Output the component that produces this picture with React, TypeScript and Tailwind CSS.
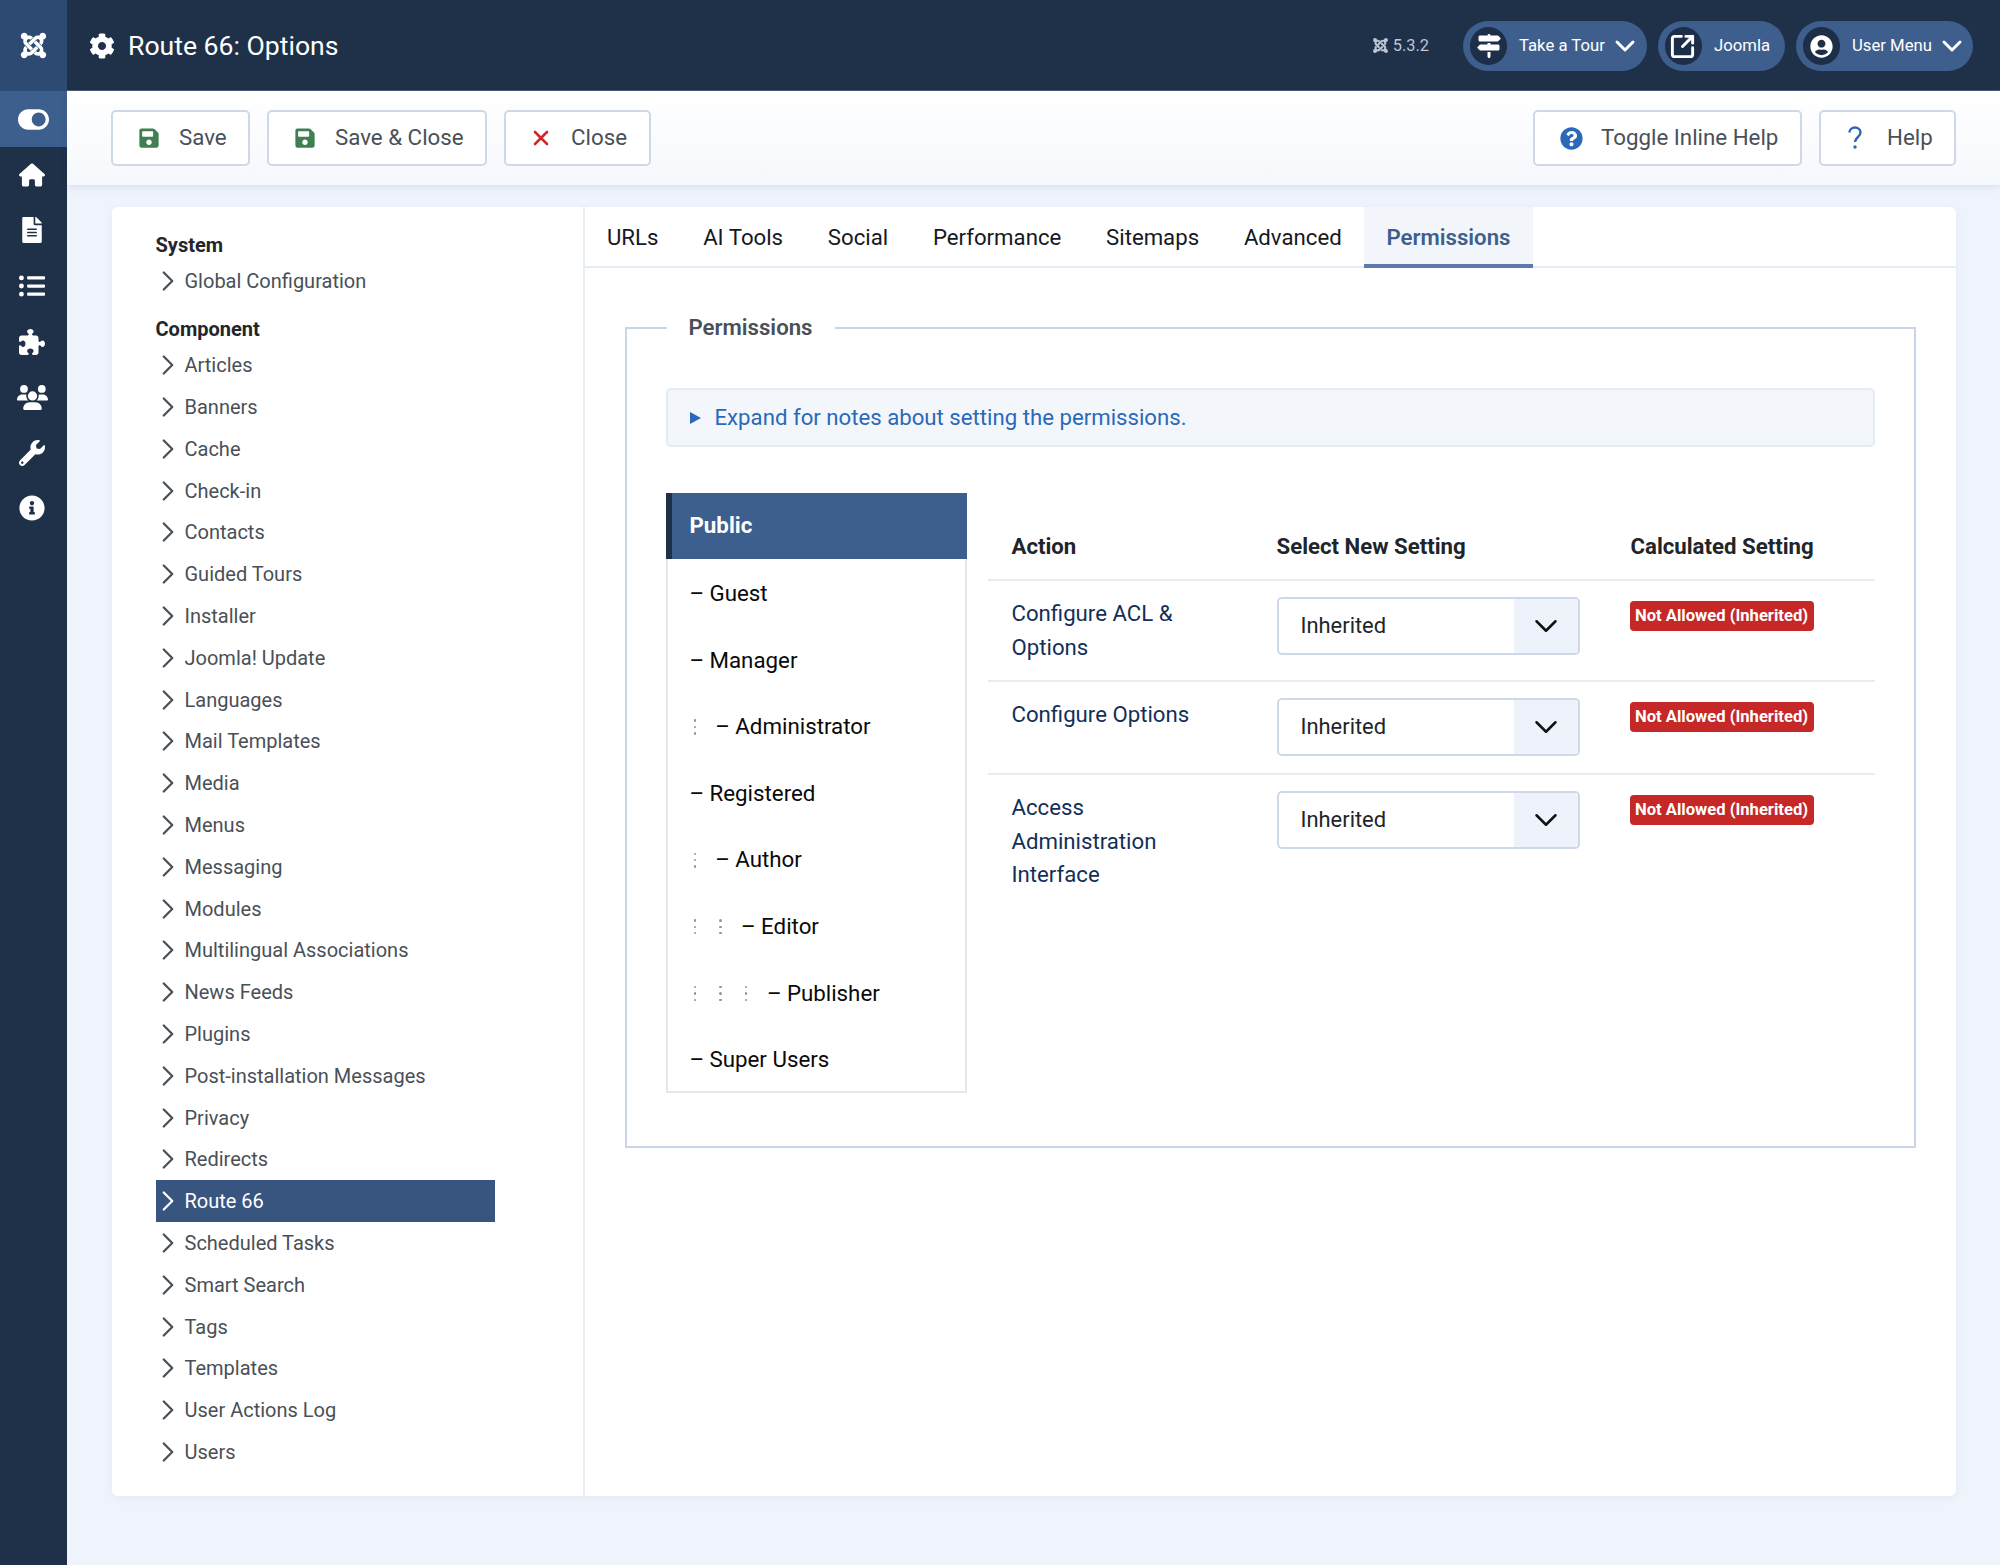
import { ChevronDown, ChevronRight, SquareArrowOutUpRight, X } from "lucide-react";
import {
  FaCog,
  FaFileAlt,
  FaInfoCircle,
  FaJoomla,
  FaListUl,
  FaQuestionCircle,
  FaSave,
  FaToggleOn,
  FaUserCircle,
  FaWrench,
} from "react-icons/fa";
import { FaHouse, FaPuzzlePiece, FaSignsPost, FaUsers } from "react-icons/fa6";

const components = [
  "Articles", "Banners", "Cache", "Check-in", "Contacts", "Guided Tours", "Installer",
  "Joomla! Update", "Languages", "Mail Templates", "Media", "Menus", "Messaging", "Modules",
  "Multilingual Associations", "News Feeds", "Plugins", "Post-installation Messages", "Privacy",
  "Redirects", "Route 66", "Scheduled Tasks", "Smart Search", "Tags", "Templates",
  "User Actions Log", "Users",
];

const tabs = ["URLs", "AI Tools", "Social", "Performance", "Sitemaps", "Advanced", "Permissions"];

const groups = [
  { name: "Guest", level: 0 },
  { name: "Manager", level: 0 },
  { name: "Administrator", level: 1 },
  { name: "Registered", level: 0 },
  { name: "Author", level: 1 },
  { name: "Editor", level: 2 },
  { name: "Publisher", level: 3 },
  { name: "Super Users", level: 0 },
];

const rules = [
  { action: ["Configure ACL &", "Options"], className: "h-[101px]" },
  { action: ["Configure Options"], className: "h-[93px]" },
  { action: ["Access", "Administration", "Interface"], className: "" },
];

const railIcons = [FaHouse, FaFileAlt, FaListUl, FaPuzzlePiece, FaUsers, FaWrench, FaInfoCircle];

function Rail() {
  return (
    <aside className="w-[67px] shrink-0 bg-[#1f3049] text-white flex flex-col items-center">
      <div className="h-[91px] w-full bg-[#2d4a72] grid place-items-center">
        <FaJoomla size={29} />
      </div>
      <div className="h-[56px] w-full bg-[#3d5f8e] grid place-items-center">
        <FaToggleOn size={31} />
      </div>
      {railIcons.map((Icon, i) => (
        <div key={i} className="h-[55.6px] w-full grid place-items-center pr-[3px]">
          <Icon size={i === 4 ? 31 : 26} />
        </div>
      ))}
    </aside>
  );
}

function Pill({ icon, label, chevron, className }: { icon: React.ReactNode; label: string; chevron?: boolean; className: string }) {
  return (
    <div className={`h-[50px] rounded-full bg-[#3e5f8d] flex items-center pl-[7px] text-white ${className}`}>
      <span className="w-[37px] h-[38px] rounded-full bg-[#1d2e48] grid place-items-center">{icon}</span>
      <span className="ml-[12px] text-[16.7px]">{label}</span>
      {chevron && <ChevronDown size={32} strokeWidth={2.2} className="ml-[4px]" />}
    </div>
  );
}

function TopBar() {
  return (
    <header className="h-[91px] pt-[2px] bg-[#1f3049] border-b border-[#4a5d78] flex items-center text-white">
      <FaCog size={26} className="ml-[22px]" />
      <h1 className="ml-[13px] text-[26.6px] leading-none">Route 66: Options</h1>
      <div className="ml-auto mr-[34px] flex items-center gap-[4px] text-[16.4px] text-[#bcc5d2]">
        <FaJoomla size={17} />
        <span>5.3.2</span>
      </div>
      <div className="flex items-center gap-[11px] mr-[27px]">
        <Pill icon={<FaSignsPost size={24} />} label="Take a Tour" chevron className="w-[184px]" />
        <Pill icon={<SquareArrowOutUpRight size={27} strokeWidth={2.6} className="-ml-[2px]" />} label="Joomla" className="w-[127px] pr-[2px]" />
        <Pill icon={<FaUserCircle size={23} />} label="User Menu" chevron className="w-[177px]" />
      </div>
    </header>
  );
}

function ToolButton({ icon, label, className }: { icon: React.ReactNode; label: string; className: string }) {
  return (
    <button className={`h-[56px] rounded-[5px] border-2 border-[#cdd8e8] bg-white flex items-center text-[22.3px] text-[#495057] ${className}`}>
      {icon}
      {label}
    </button>
  );
}

function Toolbar() {
  const save = <FaSave size={22} className="text-[#3f7f52] mr-[19px]" />;
  return (
    <div className="h-[94px] bg-gradient-to-b from-white to-[#f5f8fc] shadow-[0_2px_8px_rgba(30,50,90,0.1)] flex items-center px-[44px] gap-[17px]">
      <ToolButton icon={save} label="Save" className="w-[139px] pl-[25px]" />
      <ToolButton icon={save} label="Save & Close" className="w-[220px] pl-[25px]" />
      <ToolButton icon={<X size={24} strokeWidth={2.6} className="text-[#d3262b] mr-[18px]" />} label="Close" className="w-[147px] pl-[23px]" />
      <ToolButton
        icon={<FaQuestionCircle size={23} className="text-[#2a69b8] mr-[18px]" />}
        label="Toggle Inline Help"
        className="w-[269px] pl-[25px] ml-auto"
      />
      <ToolButton
        icon={
          <svg width="14" height="24" viewBox="0 0 14 24" className="text-[#2a69b8] mr-[25px]">
            <path d="M1.5 6.5C1.5 3.5 4 1.5 7 1.5s5.5 2 5.5 5c0 4.5-5.5 5-5.5 9.5" fill="none" stroke="currentColor" strokeWidth="2.4" />
            <circle cx="7" cy="21" r="1.7" fill="currentColor" />
          </svg>
        }
        label="Help"
        className="w-[137px] pl-[27px]"
      />
    </div>
  );
}

function NavRow({ label }: { label: string }) {
  const active = label === "Route 66";
  return (
    <div className={`h-[41.8px] flex items-center text-[20px] ${active ? "bg-[#38557f] text-white" : "text-[#495057]"}`}>
      <ChevronRight size={34} strokeWidth={1.6} className="-ml-[5px] shrink-0" />
      <span>{label}</span>
    </div>
  );
}

function SideNav() {
  return (
    <nav className="w-[473px] shrink-0 border-r-2 border-[#e8eef6] pt-[23.5px] pl-[44px] pr-[88px]">
      <div className="h-[28px] mb-[2px] flex items-center text-[20px] font-bold text-[#22262b]">System</div>
      <NavRow label="Global Configuration" />
      <div className="mt-[12px] h-[30px] flex items-center text-[20px] font-bold text-[#22262b]">Component</div>
      {components.map((c) => (
        <NavRow key={c} label={c} />
      ))}
    </nav>
  );
}

function TabBar() {
  return (
    <div className="h-[61px] border-b-2 border-[#e5ecf5] flex">
      {tabs.map((t) => (
        <div
          key={t}
          className={
            t === "Permissions"
              ? "px-[22.4px] pt-[4px] flex items-center text-[22.2px] font-semibold text-[#3e5f8d] bg-[#f2f6fa] border-b-4 border-[#5a7bab] h-[61px]"
              : "px-[22.4px] flex items-center text-[22.2px] text-[#16191d] h-[61px]"
          }
        >
          {t}
        </div>
      ))}
    </div>
  );
}

function GroupList() {
  return (
    <div className="w-[301px] h-[600px] shrink-0 border-2 border-t-0 border-[#e3e8ef] text-[22.3px] text-[#0a0a0a]">
      <div className="h-[66px] -mx-[2px] bg-[#3d5f8d] border-l-[6px] border-[#1f3049] pl-[18px] flex items-center font-bold text-white">
        Public
      </div>
      <div className="pt-[1.5px]">
        {groups.map((g) => (
          <div key={g.name} className="h-[66.6px] flex items-center pl-[22px]">
            {Array.from({ length: g.level }).map((_, i) => (
              <span key={i} className="w-[25.8px] flex flex-col gap-[4px] pl-[4px]">
                <span className="w-[2.4px] h-[2.4px] rounded-full bg-[#8f9499]" />
                <span className="w-[2.4px] h-[2.4px] rounded-full bg-[#8f9499]" />
                <span className="w-[2.4px] h-[2.4px] rounded-full bg-[#8f9499]" />
              </span>
            ))}
            <span className="w-[20px]">–</span>
            {g.name}
          </div>
        ))}
      </div>
    </div>
  );
}

function InheritedSelect() {
  return (
    <div className="w-[303px] h-[58px] rounded-[5px] border-2 border-[#cdd9ea] flex overflow-hidden text-[21.9px] text-[#212529]">
      <span className="flex-1 pl-[22px] flex items-center">Inherited</span>
      <span className="w-[64px] bg-[#eef3fb] grid place-items-center text-[#111]">
        <ChevronDown size={38} strokeWidth={1.6} />
      </span>
    </div>
  );
}

function RuleTable() {
  return (
    <div className="flex-1 text-[22.2px]">
      <div className="grid grid-cols-[266px_353px_1fr] h-[88px] border-b-2 border-[#e9ecef] font-bold text-[#212529] items-end pb-[16px] pt-[20px]">
        <span className="pl-[24px]">Action</span>
        <span className="pl-[23px]">Select New Setting</span>
        <span className="pl-[24px]">Calculated Setting</span>
      </div>
      {rules.map((r, i) => (
        <div key={i} className={`grid grid-cols-[266px_353px_1fr] border-b-2 last:border-b-0 border-[#e9ecef] pt-[16px] ${r.className}`}>
          <span className="pl-[24px] leading-[33.5px] text-[#132f58]">
            {r.action.map((line) => (
              <span key={line} className="block">{line}</span>
            ))}
          </span>
          <span className="pl-[23px]">
            <InheritedSelect />
          </span>
          <span className="pl-[23px] pt-[4px]">
            <span className="block h-[30px] w-[184px] rounded-[4px] bg-[#c52827] text-center text-[16.6px] leading-[30px] font-bold text-white whitespace-nowrap">
              Not Allowed (Inherited)
            </span>
          </span>
        </div>
      ))}
    </div>
  );
}

function PermissionsTab() {
  return (
    <div className="px-[40px] pt-[45px]">
      <fieldset className="border-2 border-[#c8d6ea] px-[39px] pb-[53px]">
        <legend className="ml-[1px] px-[22px] text-[22.2px] font-semibold text-[#495057] h-[30px] leading-[28px]">Permissions</legend>
        <div className="mt-[45px] h-[59px] rounded-[5px] border-2 border-[#e3ebf5] bg-[#f3f6fa] flex items-center pl-[22px] text-[#2a69b8] text-[22.2px]">
          <svg width="11" height="12" viewBox="0 0 11 12" className="mr-[14px]">
            <path d="M0 0l11 6-11 6z" fill="currentColor" />
          </svg>
          Expand for notes about setting the permissions.
        </div>
        <div className="mt-[46px] flex gap-[21px]">
          <GroupList />
          <RuleTable />
        </div>
      </fieldset>
    </div>
  );
}

export default function App() {
  return (
    <div className="w-[2000px] h-[1565px] flex bg-[#eff4fc] overflow-hidden font-['Roboto',sans-serif]">
      <Rail />
      <div className="flex-1 flex flex-col min-w-0">
        <TopBar />
        <Toolbar />
        <main className="mt-[22px] mx-[44.5px] h-[1289px] rounded-[6px] bg-white shadow-[0_2px_10px_rgba(30,50,90,0.06)] flex">
          <SideNav />
          <section className="flex-1 min-w-0">
            <TabBar />
            <PermissionsTab />
          </section>
        </main>
      </div>
    </div>
  );
}
